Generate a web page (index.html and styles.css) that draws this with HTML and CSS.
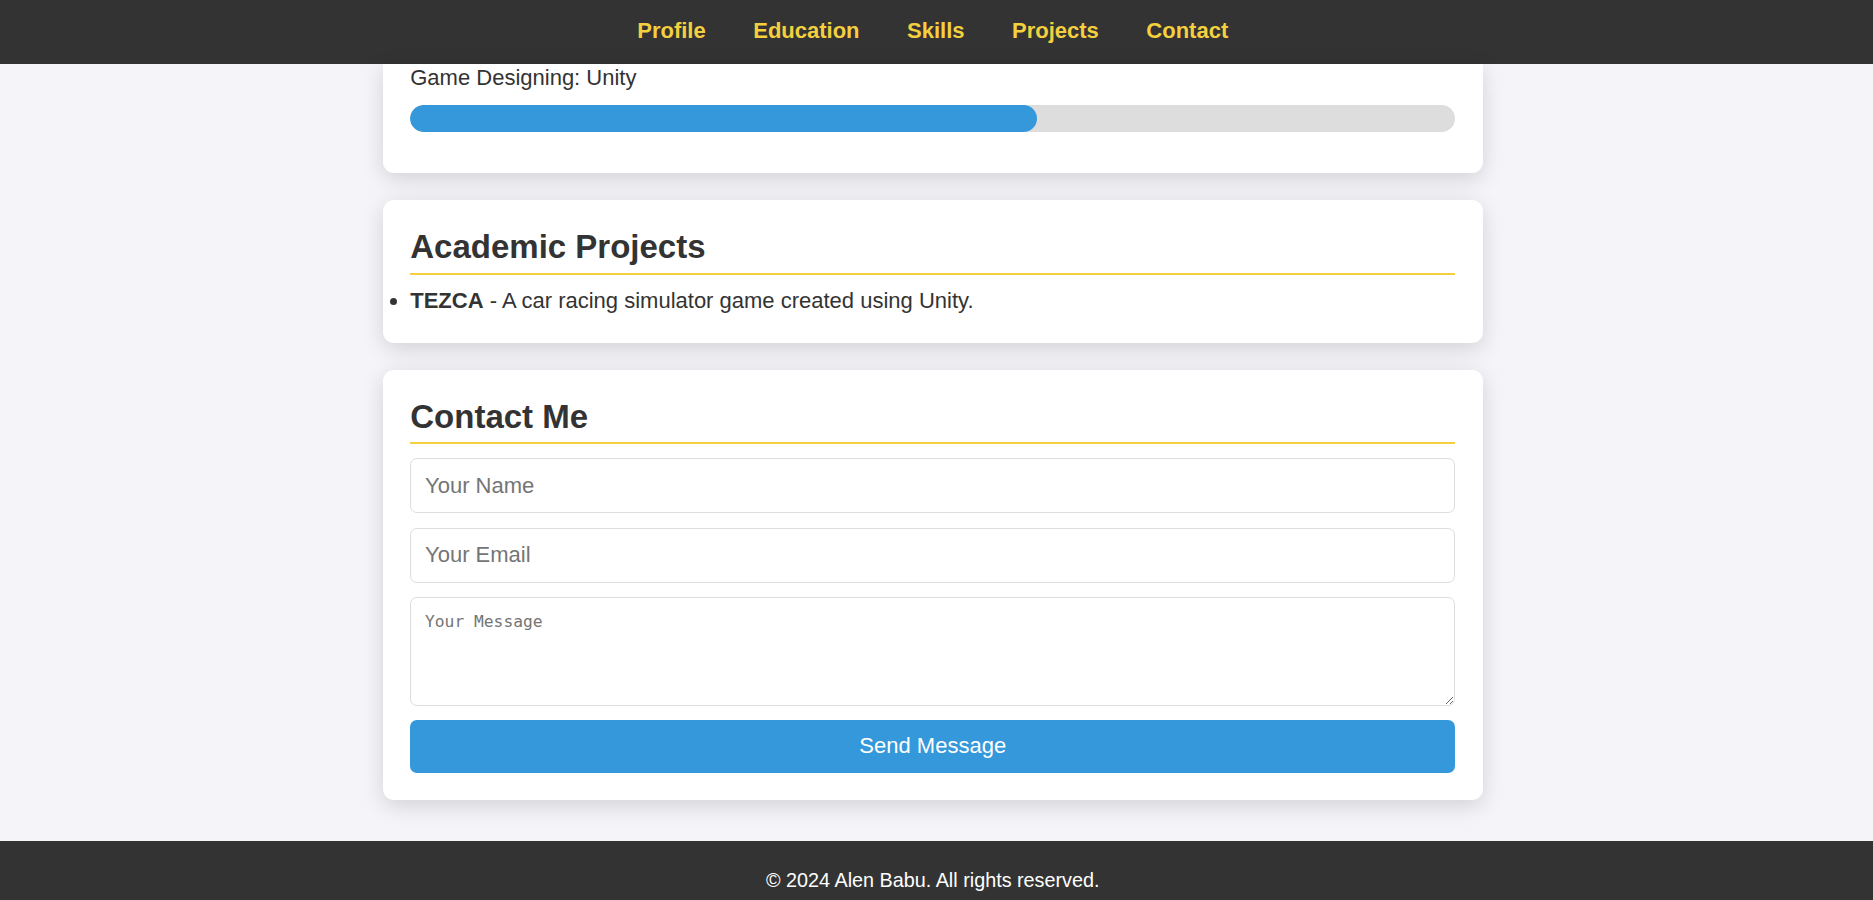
FILE: index.html
```html
<!DOCTYPE html>
<html lang="en">
<head>
<meta charset="utf-8">
<title>Alen Babu - Portfolio</title>
<link rel="stylesheet" href="styles.css">
</head>
<body>
<header class="site-header">
  <nav class="nav">
    <a href="#profile" class="nav-link">Profile</a>
    <a href="#education" class="nav-link">Education</a>
    <a href="#skills" class="nav-link">Skills</a>
    <a href="#projects" class="nav-link">Projects</a>
    <a href="#contact" class="nav-link">Contact</a>
  </nav>
</header>
<main class="main">
  <section class="card card-cut" id="skills">
    <div class="skill">
      <p class="skill-name">Game Designing: Unity</p>
      <div class="progress"><div class="progress-fill" style="width:60%"></div></div>
    </div>
  </section>
  <section class="card" id="projects">
    <h2 class="card-title">Academic Projects</h2>
    <ul class="project-list">
      <li><strong>TEZCA</strong> - A car racing simulator game created using Unity.</li>
    </ul>
  </section>
  <section class="card" id="contact">
    <h2 class="card-title">Contact Me</h2>
    <form class="contact-form">
      <input class="field" type="text" placeholder="Your Name">
      <input class="field" type="email" placeholder="Your Email">
      <textarea class="field field-message" placeholder="Your Message"></textarea>
      <button class="send-btn" type="submit">Send Message</button>
    </form>
  </section>
</main>
<footer class="site-footer">
  <p class="copyright">© 2024 Alen Babu. All rights reserved.</p>
</footer>
</body>
</html>
```
FILE: styles.css
```css
* {
  box-sizing: border-box;
}

html, body {
  margin: 0;
  padding: 0;
}

body {
  background: #f4f4f9;
  color: #333;
  font-family: "Liberation Sans", Arial, sans-serif;
  font-size: 22px;
  line-height: 25.3px;
}

.site-header {
  background: #333;
  padding: 17.5px 7.5px 21.2px 0;
}

.nav {
  display: flex;
  justify-content: center;
  gap: 47.5px;
}

.nav-link {
  color: #f4d03f;
  font-weight: bold;
  text-decoration: none;
  line-height: 25.3px;
}

.main {
  padding: 0 7.5px 13.75px 0;
}

.card {
  width: 1100px;
  margin: 0 auto 27.5px;
  background: #fff;
  border-radius: 11px;
  padding: 27.5px;
  box-shadow: 0 5.5px 22px rgba(0, 0, 0, 0.14);
}

.card-cut {
  border-top-left-radius: 0;
  border-top-right-radius: 0;
  padding-top: 1px;
}

.skill-name {
  margin: 0 0 14.7px;
}

.progress {
  height: 26.7px;
  background: #ddd;
  border-radius: 13.75px;
  overflow: hidden;
  margin-bottom: 13.75px;
}

.progress-fill {
  height: 100%;
  background: #3498db;
  border-radius: 13.75px;
}

.card-title {
  margin: 0 0 13.75px;
  font-size: 33px;
  line-height: 37.9px;
  font-weight: bold;
  color: #333;
  padding-bottom: 6.9px;
  border-bottom: 2px solid #f4d03f;
}

.project-list {
  margin: 0 0 1.3px;
  padding: 0;
  list-style: disc outside;
}

.contact-form {
  display: flex;
  flex-direction: column;
  gap: 14.3px;
}

.field {
  display: block;
  width: 100%;
  height: 55.3px;
  padding: 0 13.75px;
  border: 1px solid #ddd;
  border-radius: 6.9px;
  font-family: "Liberation Sans", Arial, sans-serif;
  font-size: 22px;
  color: #333;
  background: #fff;
}

.field::placeholder {
  color: #757575;
}

.field-message {
  height: 108.4px;
  padding: 13.75px;
  font-family: "DejaVu Sans Mono", "Liberation Mono", monospace;
  font-size: 16.3px;
}

.send-btn {
  display: block;
  width: 100%;
  height: 52.7px;
  border: none;
  border-radius: 6.9px;
  background: #3498db;
  color: #fff;
  font-family: "Liberation Sans", Arial, sans-serif;
  font-size: 22px;
  cursor: pointer;
}

.site-footer {
  background: #333;
  color: #fff;
  text-align: center;
  padding: 27.5px 7.5px 27.5px 0;
}

.copyright {
  margin: 0;
  font-size: 19.8px;
  line-height: 22.8px;
}
```
